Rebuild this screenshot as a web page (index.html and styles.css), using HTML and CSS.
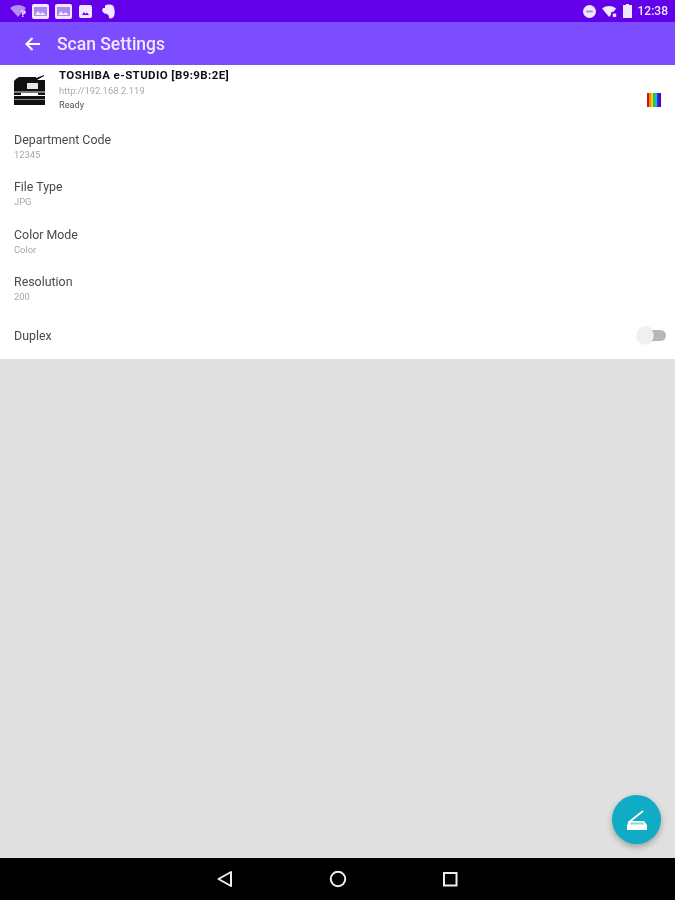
FILE: index.html
```html
<!DOCTYPE html>
<html lang="en">
<head>
<meta charset="utf-8">
<title>Scan Settings</title>
<link rel="stylesheet" href="styles.css">
</head>
<body>
<div class="app">
  <header class="status">
    <div class="status-group soft">
      <svg class="ic-wifi" width="16" height="12" viewBox="0 0 16 12"><path class="dim" d="M0 3C2.500 1 5 0 8 0s5.500 1 8 3L8 12z"/><path class="lite" d="M11 5.500h4.500v3.200H13.500v1.300H12V7.200h2V6.800h-3zM12 10.500h1.500V12H12z"/></svg>
      <svg class="ic-pic" width="17" height="15" viewBox="0 0 17 15"><path class="lite" d="M2 0h13a2 2 0 0 1 2 2v11a2 2 0 0 1-2 2H2a2 2 0 0 1-2-2V2a2 2 0 0 1 2-2z"/><path class="pane" d="M2 3h13v9H2z"/><path class="lite" d="M3 11l3-4 2.500 3 2-2 3.500 3z"/></svg>
      <svg class="ic-pic" width="17" height="15" viewBox="0 0 17 15"><path class="lite" d="M2 0h13a2 2 0 0 1 2 2v11a2 2 0 0 1-2 2H2a2 2 0 0 1-2-2V2a2 2 0 0 1 2-2z"/><path class="pane" d="M2 3h13v9H2z"/><path class="lite" d="M3 11l3-4 2.500 3 2-2 3.500 3z"/></svg>
      <svg class="ic-photo" width="13" height="13" viewBox="0 0 13 13"><path class="lite" d="M2 0h9a2 2 0 0 1 2 2v9a2 2 0 0 1-2 2H2a2 2 0 0 1-2-2V2a2 2 0 0 1 2-2z"/><path class="ink" d="M3 10l2-3 1.500 2 1.500-1.500 2 2.500z"/></svg>
      <svg class="ic-ever" width="13" height="15" viewBox="0 0 13 15"><path class="lite" d="M3 1.500C5 0 9 0 11 1.500c1.500 2 2 6 1.500 9-.5 2.500-2 4-4 4-1.500 0-2-1-1.500-2.500L5 10C3 10 1 9 0 6.500L1 4h2z"/></svg>
    </div>
    <div class="status-group right soft">
      <svg width="13" height="13" viewBox="0 0 14 14"><circle class="lite" cx="7" cy="7" r="7"/><path class="pane" d="M3.500 6h7v2h-7z"/></svg>
      <svg width="15" height="11" viewBox="0 0 18 13"><path class="lite" d="M0 3C2.500 1 5.500 0 8.500 0s6 1 8.500 3L8.500 13z"/><path class="ink" d="M11 7h7v6h-7z"/><path class="lite" d="M13 9h4v4h-4z"/></svg>
      <svg width="9" height="14" viewBox="0 0 9 14"><path class="lite" d="M3 0h3v1h3v13H0V1h3z"/></svg>
      <span class="clock">12:38</span>
    </div>
  </header>

  <div class="toolbar">
    <svg class="back soft" width="16" height="14" viewBox="0 0 16 14"><path d="M15 7H2M7.500 1 1.500 7l6 6" fill="none" stroke="#fff" stroke-width="2"/></svg>
    <h1 class="title soft">Scan Settings</h1>
  </div>

  <main class="panel">
    <section class="printer">
      <svg class="printer-ic soft" width="31" height="31" viewBox="0 0 31 31">
        <path d="M2 5 5 3h17v1l8-3v1l-7 4h8v15H24v-4H7v4H0V7z" fill="#111"/>
        <path d="M13 9h11v6H13z" fill="#e6e6e6"/>
        <path d="M0 17h31v2H0z" fill="#777"/>
        <path d="M0 22h31v9H0z" fill="#111"/>
        <path d="M0 25h31v1H0z" fill="#8a8a8a"/>
      </svg>
      <div class="printer-text soft">
        <div class="printer-name">TOSHIBA e-STUDIO [B9:9B:2E]</div>
        <div class="printer-url">http://192.168.2.119</div>
        <div class="printer-state">Ready</div>
      </div>
      <svg class="spectrum" width="14" height="14" viewBox="0 0 14 14"><path fill="#d0102a" d="M0 0h2v14H0z"/><path fill="#f08a00" d="M2 0h2v14H2z"/><path fill="#ecd800" d="M4 0h2v14H4z"/><path fill="#2cc830" d="M6 0h2v14H6z"/><path fill="#18b8e8" d="M8 0h2v14H8z"/><path fill="#2030e0" d="M10 0h2v14h-2z"/><path fill="#5a00b0" d="M12 0h2v14h-2z"/></svg>
    </section>
    <section class="row soft"><div class="label">Department Code</div><div class="value">12345</div></section>
    <section class="row soft"><div class="label">File Type</div><div class="value">JPG</div></section>
    <section class="row soft"><div class="label">Color Mode</div><div class="value">Color</div></section>
    <section class="row soft"><div class="label">Resolution</div><div class="value">200</div></section>
    <section class="row-switch soft">
      <div class="label">Duplex</div>
      <div class="switch"><span class="track"></span><span class="thumb"></span></div>
    </section>
  </main>

  <div class="canvas">
    <button class="fab" aria-label="Scan">
      <svg class="fab-ic" width="20" height="20" viewBox="0 0 20 20"><path d="M1 13 16 1" fill="none" stroke="#fff" stroke-width="1.800"/><path fill="#fff" d="M3 11h14l3 4v5H0v-5z"/><path fill="#8ed6e4" d="M4 12.500h12l1.500 2h-15z"/></svg>
    </button>
  </div>

  <nav class="navbar">
    <svg width="18" height="18" viewBox="0 0 18 18"><path d="M15 2 2.500 9 15 16z" fill="none" stroke="#eee" stroke-width="2" stroke-linejoin="round"/></svg>
    <svg width="18" height="18" viewBox="0 0 18 18"><circle cx="9" cy="9" r="7.200" fill="none" stroke="#eee" stroke-width="2"/></svg>
    <svg width="16" height="16" viewBox="0 0 16 16"><path d="M2 2h12.500v12.500H2z" fill="none" stroke="#eee" stroke-width="2"/></svg>
  </nav>
</div>
</body>
</html>
```
FILE: styles.css
```css
* { box-sizing: border-box; margin: 0; padding: 0; }
html, body { width: 675px; height: 900px; overflow: hidden; }
body { font-family: Roboto, "Liberation Sans", sans-serif; background: #e0e0e0; }
.app { width: 675px; height: 900px; display: flex; flex-direction: column; }
.soft { filter: blur(0.6px); }
.lite { fill: #f1e8ff; }
.dim { fill: #b48cf8; }
.pane { fill: #a98af0; }
.ink { fill: #6200ea; }

.status { height: 22px; background: #6200ea; display: flex; justify-content: space-between; align-items: center; padding: 0 7px 0 10px; }
.status-group { display: flex; align-items: center; }
.ic-wifi { margin-right: 6px; }
.ic-pic { margin-right: 6px; }
.ic-photo { margin: 0 10px 0 1px; }
.right { gap: 6px; }
.clock { color: #f1e8ff; font-size: 12px; font-weight: 500; }

.toolbar { height: 43px; background: #7c4dff; display: flex; align-items: center; padding-left: 25px; }
.back { margin-right: 16px; }
.title { color: #efe8ff; font-size: 17.500px; font-weight: 500; line-height: 1; padding-top: 2px; }

.panel { height: 294px; background: #fff; z-index: 1; }
.printer { height: 51px; display: flex; padding: 3px 14px 0 14px; }
.printer-ic { margin: 6px 14px 0 0; flex: none; }
.printer-text { flex: 1; }
.printer-name { font-size: 11.500px; font-weight: 700; color: #111; line-height: 15px; letter-spacing: .4px; }
.printer-url { font-size: 9.400px; color: #aaa; line-height: 13px; margin-top: 1px; }
.printer-state { font-size: 9.200px; color: #555; line-height: 12px; margin-top: 2px; }
.spectrum { margin-top: 25px; }

.row { height: 47.4px; padding: 16px 14px 0; }
.label { font-size: 12.400px; color: #4a4a4a; line-height: 16px; }
.value { font-size: 9.400px; color: #a6a6a6; line-height: 12px; margin-top: 1px; }
.row-switch { height: 53px; padding: 7px 9px 0 14px; display: flex; align-items: center; justify-content: space-between; }
.switch { width: 29px; height: 18px; position: relative; }
.track { position: absolute; left: 8px; right: 0; top: 3px; height: 11px; border-radius: 6px; background: #b8b8b8; }
.thumb { position: absolute; left: 0; top: 0; width: 17px; height: 17px; border-radius: 50%; background: #f0f0f0; box-shadow: 0 0 2px rgba(0,0,0,.15); }

.canvas { flex: 1; background: #e0e0e0; position: relative; }
.fab { position: absolute; right: 14px; bottom: 14px; width: 49px; height: 49px; border: 0; border-radius: 50%; background: #10acc6; box-shadow: 0 3px 6px rgba(0,0,0,.28); display: flex; align-items: center; justify-content: center; }
.fab-ic { filter: blur(0.4px); }

.navbar { height: 42px; background: #000; display: flex; justify-content: center; align-items: center; gap: 95px; padding-right: 1px; }
```
